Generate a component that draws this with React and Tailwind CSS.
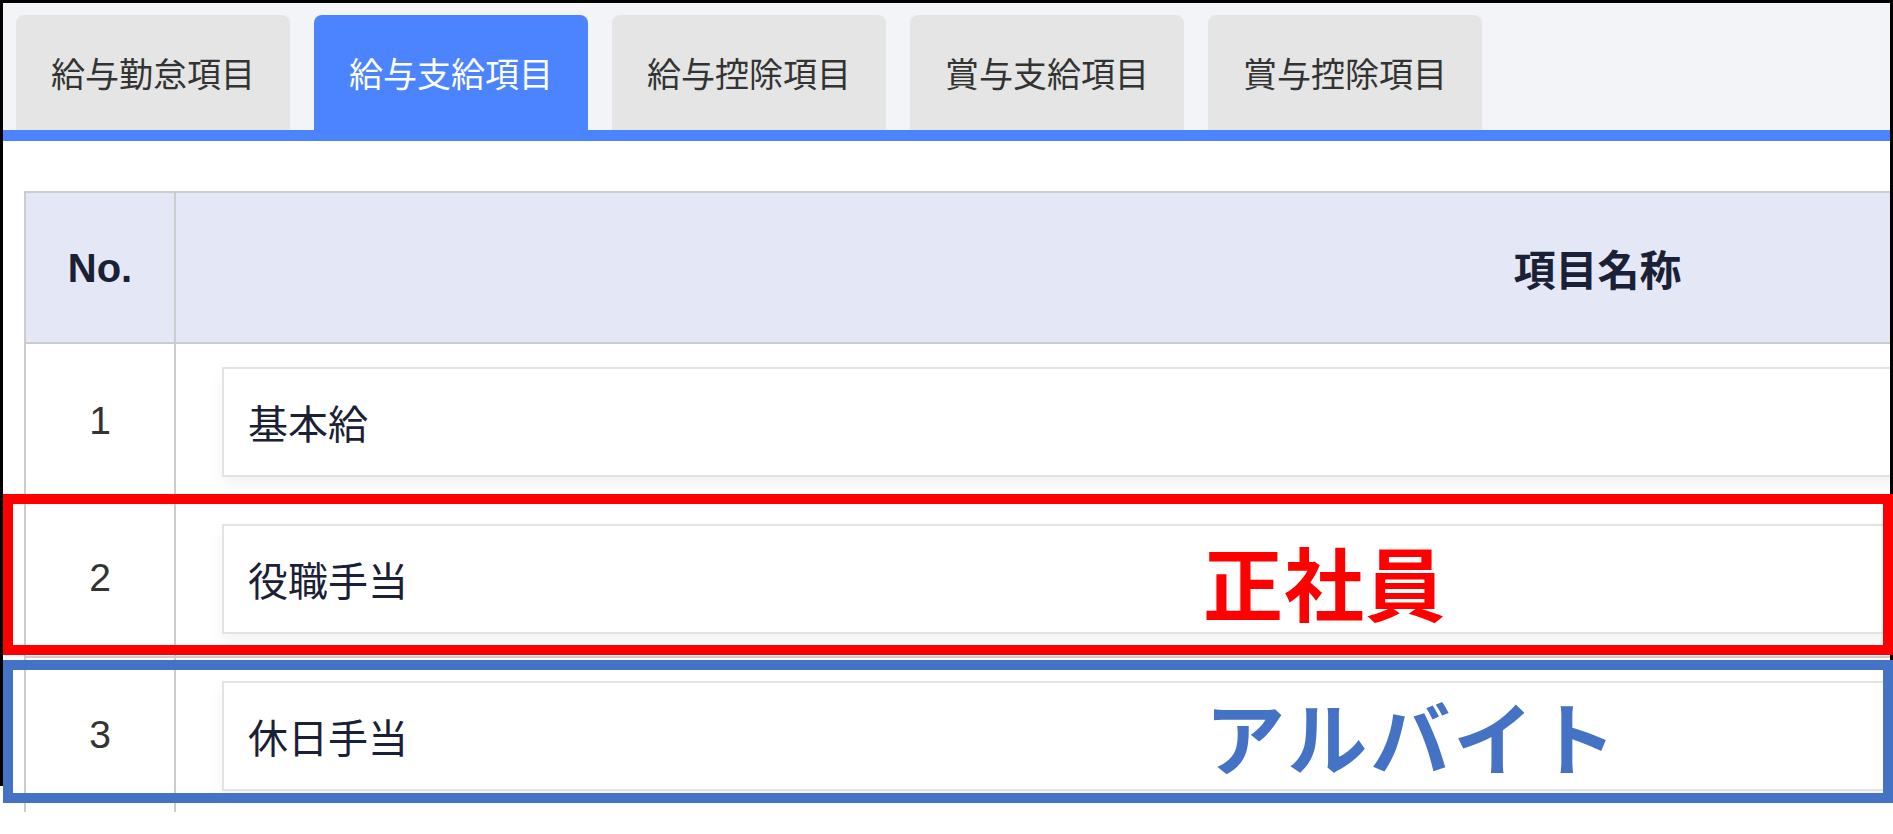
import React from "react";

const tabs = ["給与勤怠項目", "給与支給項目", "給与控除項目", "賞与支給項目", "賞与控除項目"];
const rows = [
  { no: "1", name: "基本給" },
  { no: "2", name: "役職手当" },
  { no: "3", name: "休日手当" },
];

const jp = { fontFamily: '"Noto Sans CJK JP", "Noto Sans", sans-serif' };
const latin = { fontFamily: '"Liberation Sans", Arial, sans-serif' };

export default function App() {
  return (
    <div className="relative w-[1893px] h-[834px] overflow-hidden bg-white">
      <div className="h-[812px] overflow-hidden">
        <div className="h-[786px] border-x-[3px] border-t-[3px] border-black overflow-x-clip">
          <div className="flex items-end gap-[24px] bg-[#f3f4f8] pl-[13px] pt-[12px]">
            {tabs.map((t, i) => (
              <div
                key={t}
                className={
                  i === 1
                    ? "flex h-[115px] w-[274px] shrink-0 items-center justify-center rounded-t-[8px] bg-[#4c84ff] text-[34px] text-white"
                    : "flex h-[115px] w-[274px] shrink-0 items-center justify-center rounded-t-[8px] bg-[#e5e5e5] text-[34px] text-[#333333]"
                }
                style={jp}
              >
                {t}
              </div>
            ))}
          </div>
          <div className="h-[11px] bg-[#4c84ff]" />
          <div className="pl-[21px] pt-[50px]">
            <div className="w-[2997px] border-x-2 border-t-2 border-[#cccccc]">
              <div className="flex h-[151px] border-b-2 border-[#cccccc] bg-[#e4e8f6]">
                <div
                  className="flex w-[150px] shrink-0 items-center justify-center border-r-2 border-[#cccccc] text-[40px] font-bold text-[#1a2035]"
                  style={latin}
                >
                  No.
                </div>
                <div
                  className="flex flex-1 items-center justify-center text-[42px] font-bold text-[#1a2035]"
                  style={jp}
                >
                  項目名称
                </div>
              </div>
              {rows.map((r) => (
                <div key={r.no} className="flex h-[157px] border-b-2 border-[#cccccc]">
                  <div
                    className="flex w-[150px] shrink-0 items-center justify-center border-r-2 border-[#cccccc] text-[39px] text-[#333333]"
                    style={latin}
                  >
                    {r.no}
                  </div>
                  <div className="flex-1 px-[46px] pt-[23px]">
                    <div
                      className="flex h-[110px] items-center border-2 border-[#e3e3e3] bg-white pl-[24px] text-[40px] text-[#1a2035] shadow-[0_8px_14px_rgba(0,0,0,0.05)]"
                      style={jp}
                    >
                      {r.name}
                    </div>
                  </div>
                </div>
              ))}
            </div>
          </div>
        </div>
      </div>

      <div className="absolute left-[3px] top-[494px] h-[161px] w-[1890px] border-[10px] border-[#ff0000]" />
      <div className="absolute left-[3px] top-[660px] h-[143px] w-[1890px] border-[10px] border-[#4472c4]" />
      <div
        className="absolute left-[1203px] top-[540px] text-[80px] font-bold leading-none tracking-[1px] text-[#ff0000]"
        style={jp}
      >
        正社員
      </div>
      <div
        className="absolute left-[1205px] top-[694px] text-[80px] font-bold leading-none tracking-[3px] text-[#4472c4]"
        style={jp}
      >
        アルバイト
      </div>
    </div>
  );
}
